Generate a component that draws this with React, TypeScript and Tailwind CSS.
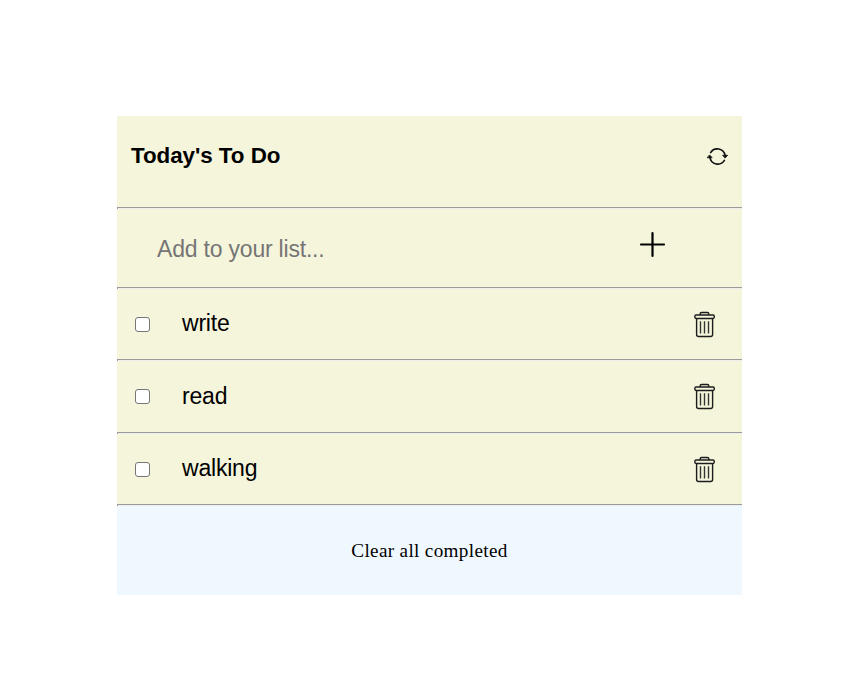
const items = [
  { text: "write", row: "h-[72px]", pad: "pt-[18px]" },
  { text: "read", row: "h-[73px]", pad: "pt-[19px]" },
  { text: "walking", row: "h-[72px]", pad: "pt-[18px]" },
];

function Rule() {
  return (
    <div className="flex h-0.5 w-full shrink-0 flex-col">
      <div className="h-px bg-[#9a9a9a]" />
      <div className="flex h-px bg-[#eeeeee]">
        <div className="w-px bg-[#9a9a9a]" />
      </div>
    </div>
  );
}

function SyncIcon() {
  return (
    <svg width="22" height="22" viewBox="0 0 22 22" fill="none" stroke="#111" strokeWidth="1.6" strokeLinecap="round">
      <path d="M3.6 6.6A7.9 7.9 0 0 1 18.1 9.6M17.4 14.4A7.9 7.9 0 0 1 2.9 11.4" />
      <path d="M16 9.3h4.6l-2.3 2.5zM.5 11.7h4.6l-2.3-2.5z" fill="#111" strokeWidth=".9" strokeLinejoin="round" />
    </svg>
  );
}

function TrashIcon() {
  return (
    <svg width="22" height="27" viewBox="0 0 22 27" fill="none" stroke="#1c1c1c" strokeWidth="1.4" strokeLinejoin="round">
      <path d="M6.2 4V2.8Q6.2 1.5 7.6 1.5h5.8Q14.8 1.5 14.8 2.8V4" />
      <rect x=".8" y="4" width="19.5" height="3.5" rx="1.4" />
      <path d="M2.6 7.5v16q0 2 2 2h12q2 0 2-2v-16" />
      <path d="M6.5 10.2v12.2M10.5 10.2v12.2M14.5 10.2v12.2" stroke="#333" />
    </svg>
  );
}

export default function App() {
  return (
    <div className="px-[117px] pt-[116px] font-['Liberation_Sans',Arial,sans-serif] text-black">
      <main className="w-[625px] bg-[#f5f5dc]">
        <header className="flex h-[91px] items-start justify-between pr-[13px] pl-[14px]">
          <h1 className="pt-[24px] text-[22.4px] leading-[32px] font-bold tracking-[-0.05px]">Today's To Do</h1>
          <button className="mt-[30px]" aria-label="Refresh"><SyncIcon /></button>
        </header>
        <Rule />
        <form className="flex h-[78px] items-start pl-10">
          <input className="mt-[24px] h-8 w-[482px] bg-transparent text-[23px] leading-8 tracking-[-0.2px] outline-none placeholder:text-[#757575]" placeholder="Add to your list..." aria-label="New item" />
          <button type="button" className="mt-[22px]" aria-label="Add">
            <svg width="27" height="27" viewBox="0 0 27 27" stroke="#000" strokeWidth="2.2" strokeLinecap="round">
              <path d="M13.5 2v23M2 13.5h23" />
            </svg>
          </button>
        </form>
        <ul>
          {items.map(({ text, row, pad }) => (
            <li key={text} className={row}>
              <Rule />
              <div className="flex items-start">
                <input type="checkbox" aria-label={text} className="mt-[28px] ml-[18px] size-[15px] appearance-none rounded-[3px] border border-[#767676] bg-white" />
                <span className={"ml-8 w-[512px] text-[23px] leading-8 tracking-[-0.2px] " + pad}>{text}</span>
                <button className="mt-[22px]" aria-label="Delete"><TrashIcon /></button>
              </div>
            </li>
          ))}
        </ul>
        <Rule />
        <footer className="flex h-[89px] justify-center bg-[#f0f8ff] pt-[33px] font-['Liberation_Serif','Times_New_Roman',serif] text-[19.2px] leading-6 tracking-[0.32px]">
          <button className="h-6">Clear all completed</button>
        </footer>
      </main>
    </div>
  );
}
